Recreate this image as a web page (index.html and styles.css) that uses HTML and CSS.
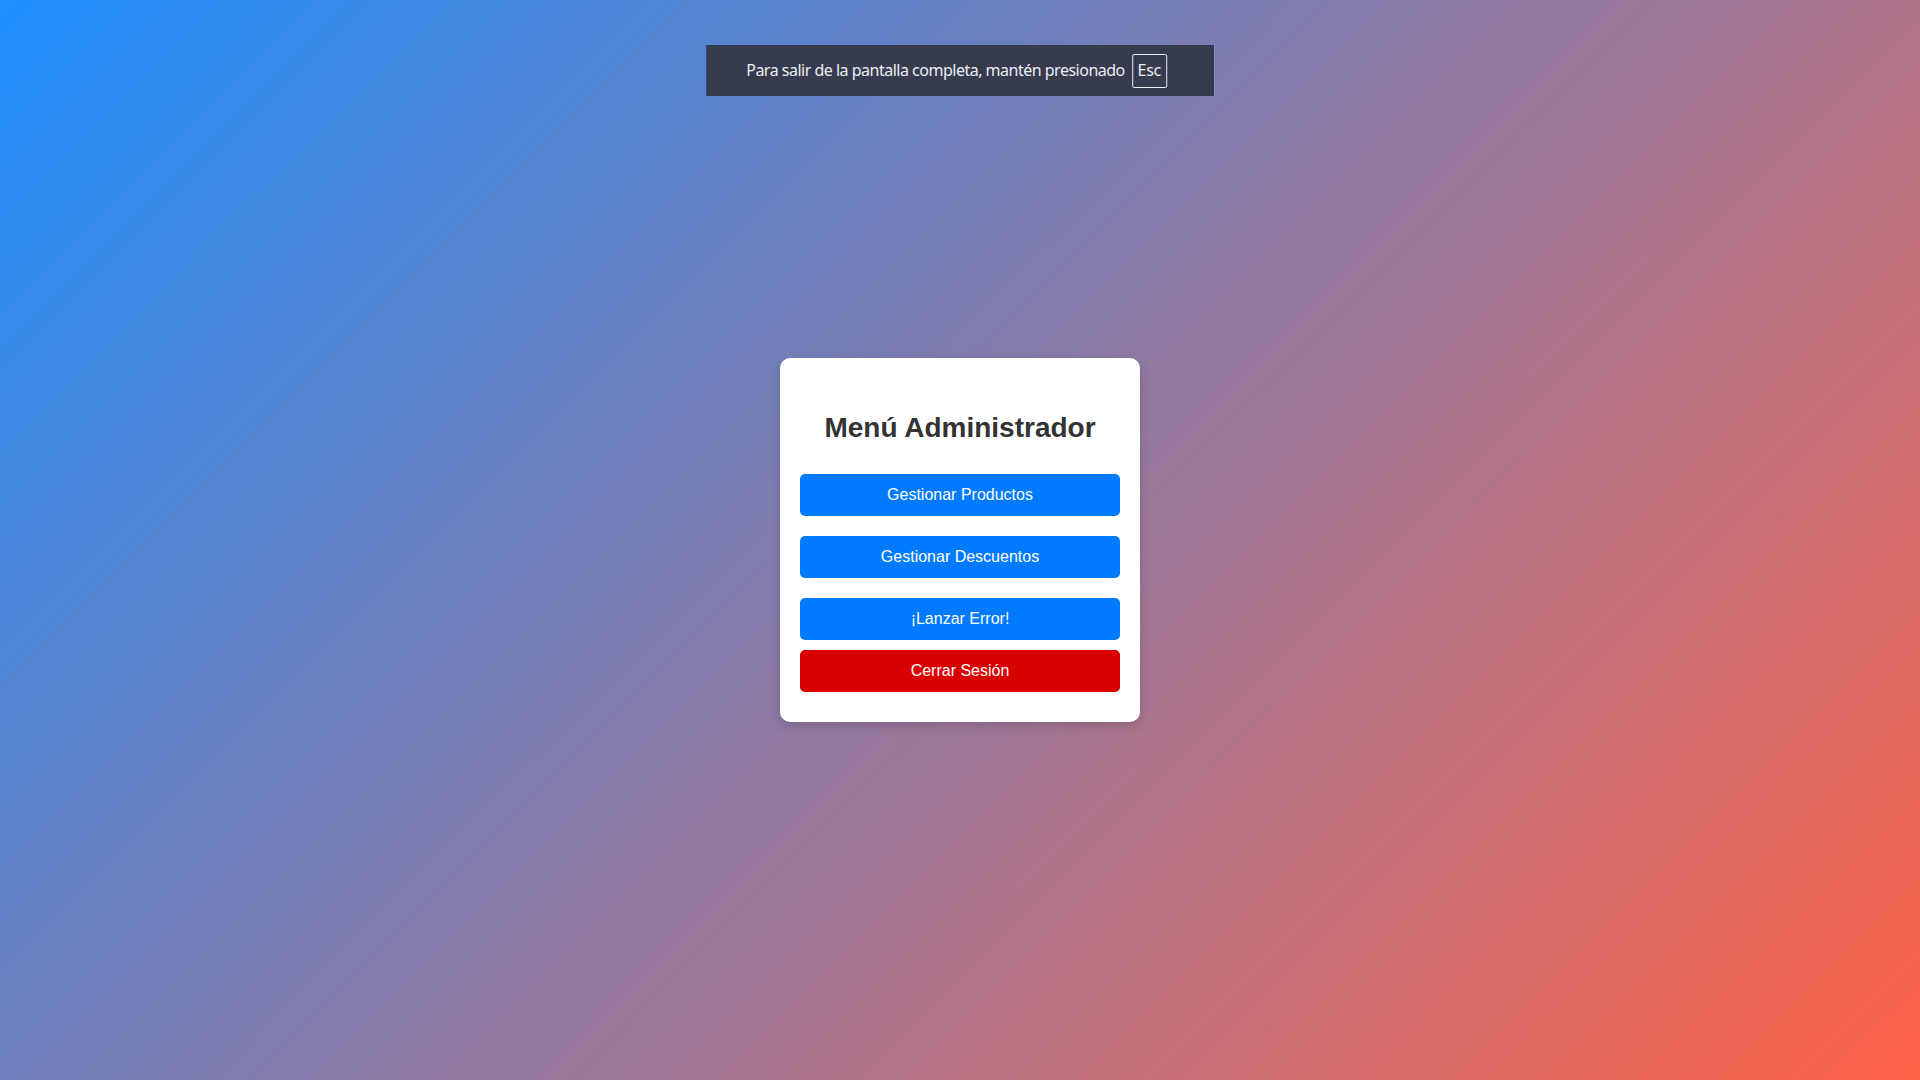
FILE: index.html
```html
<!DOCTYPE html>
<html lang="es">
<head>
<meta charset="utf-8">
<title>Menú Administrador</title>
<link rel="stylesheet" href="styles.css">
</head>
<body>
<div class="fs-notice">
  <span class="fs-text">Para salir de la pantalla completa, mantén presionado</span>
  <span class="fs-key">Esc</span>
</div>
<main class="page">
  <div class="card">
    <h1 class="title">Menú Administrador</h1>
    <button class="btn btn-blue btn-gap">Gestionar Productos</button>
    <button class="btn btn-blue btn-gap">Gestionar Descuentos</button>
    <button class="btn btn-blue btn-gap-sm">¡Lanzar Error!</button>
    <button class="btn btn-red">Cerrar Sesión</button>
  </div>
</main>
</body>
</html>
```
FILE: styles.css
```css
* { box-sizing: border-box; }
html, body { height: 100%; }
body {
  margin: 0;
  font-family: "Liberation Sans", Arial, sans-serif;
  background: linear-gradient(135deg, #1e90ff, #ff6347);
  min-height: 100vh;
}
.page {
  height: 100vh;
  display: flex;
  align-items: center;
  justify-content: center;
}
.card {
  width: 360px;
  background: #fff;
  border-radius: 10px;
  padding: 20px 20px 30px;
  box-shadow: 0 4px 12px rgba(0, 0, 0, 0.15);
  display: flex;
  flex-direction: column;
}
.title {
  margin: 34px 0 30px;
  font-size: 28px;
  line-height: 32px;
  font-weight: bold;
  color: #333;
  text-align: center;
}
.btn {
  display: block;
  width: 100%;
  height: 42px;
  border: none;
  border-radius: 5px;
  color: #fff;
  font-family: "Liberation Sans", Arial, sans-serif;
  font-size: 16px;
  padding: 0;
  cursor: pointer;
}
.btn-blue { background: #007bff; }
.btn-red { background: #d90000; }
.btn-gap { margin-bottom: 20px; }
.btn-gap-sm { margin-bottom: 10px; }
.fs-notice {
  position: fixed;
  top: 45px;
  left: 50%;
  transform: translateX(-50%);
  height: 51px;
  padding: 0 47px 0 40px;
  background: #363c4e;
  display: flex;
  align-items: center;
  gap: 7px;
  white-space: nowrap;
  font-family: "Noto Sans", "Open Sans", sans-serif;
  color: #eceff4;
}
.fs-text { font-size: 16px; letter-spacing: -0.5px; line-height: 20px; margin-top: -2px; }
.fs-key {
  font-size: 16px;
  border: 1px solid #eceff4;
  border-radius: 2px;
  height: 34px;
  width: 35px;
  display: flex;
  align-items: center;
  justify-content: center;
  letter-spacing: -0.3px;
  padding-bottom: 2px;
}
```
